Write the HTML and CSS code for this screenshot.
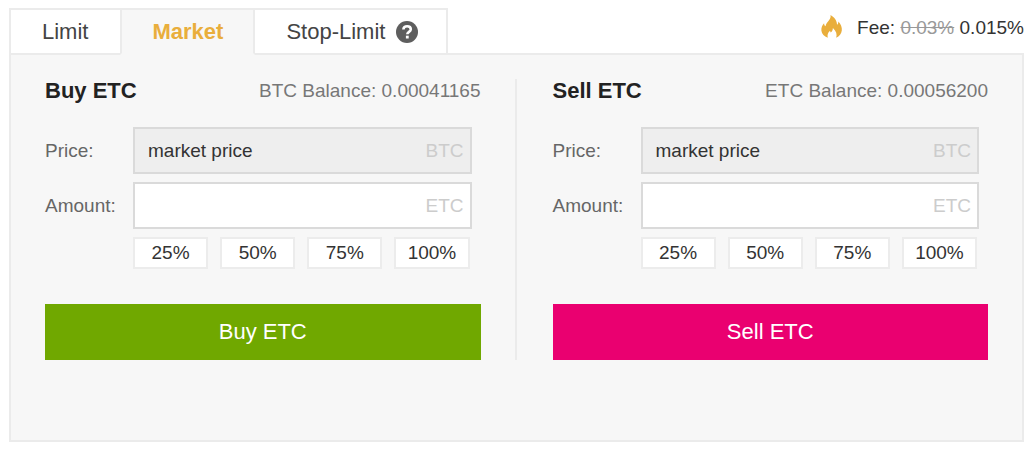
FILE: index.html
```html
<!DOCTYPE html>
<html lang="en">
<head>
    <meta charset="UTF-8">
    <meta name="viewport" content="width=device-width, initial-scale=1.0">
    <title>Trade ETC/BTC</title>
    <link rel="stylesheet" href="styles.css">
</head>
<body>

    <div class="trade-box">
        <div class="trade-header">
            <nav class="tabs">
                <a href="#limit" class="tab">Limit</a>
                <a href="#market" class="tab active">Market</a>
                <a href="#stop-limit" class="tab">Stop-Limit
                    <svg class="help-icon" viewBox="0 0 22 22" aria-hidden="true">
                        <circle cx="11" cy="11" r="11" fill="#5e5e5e"/>
                        <path d="M7.400 8.600C7.400 6.300 9 5.200 11.100 5.200c2.200 0 3.700 1.200 3.700 3.100 0 2.700-3.500 2.500-3.500 5" fill="none" stroke="#fff" stroke-width="2.600"/>
                        <rect x="9.900" y="14.700" width="2.800" height="2.800" fill="#fff"/>
                    </svg>
                </a>
            </nav>
            <div class="fee">
                <svg class="fire-icon" viewBox="0 0 22 23" aria-hidden="true">
                    <path d="M9.500 0C13.600 2.200 16 5.800 16 9.800c1-.8 1.400-1.900 1.300-3.400 2.600 2.700 3.900 5.800 3.500 9.200-.4 3.300-2.300 5.800-5.600 7.200 1.100-3.500.1-6.600-3.300-9.800-.1 2.300-.8 3.500-2.200 4.500-.3-.7-.6-1.200-.7-1.800-2.200 2-2.900 4.300-2.200 7C3.200 21.200.8 18.900.4 15.700c-.3-3 .9-5.600 2.700-7.500 0 1.400.4 2.300 1.400 3C5 8.600 6.400 7.200 8 5.200 9.300 3.600 9.900 2 9.500 0z" fill="#e9ae3c"/>
                </svg>
                <span>Fee: <del>0.03%</del> 0.015%</span>
            </div>
        </div>

        <div class="trade-panel">
            <form class="order-form">
                <div class="form-header">
                    <h2>Buy ETC</h2>
                    <span class="balance">BTC Balance: 0.00041165</span>
                </div>
                <div class="field">
                    <label for="buy-price">Price:</label>
                    <div class="input-box disabled">
                        <input type="text" id="buy-price" value="market price" readonly>
                        <span class="unit">BTC</span>
                    </div>
                </div>
                <div class="field">
                    <label for="buy-amount">Amount:</label>
                    <div class="input-box">
                        <input type="text" id="buy-amount">
                        <span class="unit">ETC</span>
                    </div>
                </div>
                <div class="percents">
                    <button type="button">25%</button>
                    <button type="button">50%</button>
                    <button type="button">75%</button>
                    <button type="button">100%</button>
                </div>
                <button type="button" class="submit buy">Buy ETC</button>
            </form>

            <form class="order-form">
                <div class="form-header">
                    <h2>Sell ETC</h2>
                    <span class="balance">ETC Balance: 0.00056200</span>
                </div>
                <div class="field">
                    <label for="sell-price">Price:</label>
                    <div class="input-box disabled">
                        <input type="text" id="sell-price" value="market price" readonly>
                        <span class="unit">BTC</span>
                    </div>
                </div>
                <div class="field">
                    <label for="sell-amount">Amount:</label>
                    <div class="input-box">
                        <input type="text" id="sell-amount">
                        <span class="unit">ETC</span>
                    </div>
                </div>
                <div class="percents">
                    <button type="button">25%</button>
                    <button type="button">50%</button>
                    <button type="button">75%</button>
                    <button type="button">100%</button>
                </div>
                <button type="button" class="submit sell">Sell ETC</button>
            </form>
        </div>
    </div>

</body>
</html>
```
FILE: styles.css
```css
* {
    box-sizing: border-box;
}

body {
    margin: 0;
    background-color: #fff;
    color: #333;
    font-family: "Liberation Sans", Arial, sans-serif;
    font-size: 19px;
}

input,
button {
    font-family: inherit;
    font-size: inherit;
    color: inherit;
}

.trade-box {
    padding: 8px 12px 14px 9px;
}

.trade-header {
    display: flex;
    justify-content: space-between;
    align-items: flex-start;
}

/* sits above the panel so the active tab opens into it */
.tabs {
    display: flex;
    position: relative;
    z-index: 1;
    border: 2px solid #ebebeb;
    border-bottom: none;
}

.tab {
    display: flex;
    align-items: center;
    gap: 11px;
    height: 45px;
    padding: 0 32px 0 31px;
    border-bottom: 2px solid #ebebeb;
    background-color: #fff;
    color: #444;
    font-size: 22px;
    text-decoration: none;
}

.tab:last-child {
    padding-right: 28px;
}

.tab.active {
    padding: 0 30px;
    border-left: 2px solid #ebebeb;
    border-right: 2px solid #ebebeb;
    border-bottom-color: #f7f7f7;
    background-color: #f7f7f7;
    color: #e9ae3c;
    font-weight: bold;
}

.help-icon {
    width: 22px;
    height: 22px;
}

.fee {
    display: flex;
    align-items: center;
    gap: 14px;
    height: 40px;
}

.fee del {
    color: #999;
}

.fire-icon {
    width: 22px;
    height: 23px;
    margin-bottom: 4px;
}

.trade-panel {
    display: grid;
    grid-template-columns: 1fr 1fr;
    margin-top: -2px;
    padding: 24px 0 80px;
    border: 2px solid #ebebeb;
    background-color: #f7f7f7;
}

.order-form {
    padding: 0 34px 0 36px;
}

.order-form:first-child {
    padding-left: 34px;
    border-right: 2px solid #ebebeb;
}

.form-header {
    display: flex;
    justify-content: space-between;
    align-items: center;
    height: 24px;
    margin-bottom: 24px;
}

.form-header h2 {
    margin: 0;
    color: #222;
    font-size: 22px;
}

.balance {
    color: #777;
}

.field {
    display: flex;
    align-items: center;
    margin: 0 9px 8px 0;
}

.field label {
    width: 88px;
    color: #666;
}

.input-box {
    display: flex;
    flex: 1;
    align-items: center;
    height: 47px;
    padding: 0 6px 0 13px;
    border: 2px solid #dadada;
    background-color: #fff;
}

.input-box.disabled {
    background-color: #eee;
}

.input-box input {
    flex: 1;
    min-width: 0;
    padding: 0;
    border: none;
    outline: none;
    background: none;
}

.unit {
    color: #ccc;
}

.percents {
    display: grid;
    grid-template-columns: repeat(4, 1fr);
    gap: 12px;
    margin: 0 11px 35px 88px;
}

.percents button {
    height: 32px;
    padding: 0;
    border: 2px solid #ececec;
    background-color: #fff;
    cursor: pointer;
}

.submit {
    display: block;
    width: 100%;
    height: 56px;
    border: none;
    color: #fff;
    font-size: 22px;
    cursor: pointer;
}

.buy {
    background-color: #70a800;
}

.sell {
    background-color: #ea0070;
}
```
